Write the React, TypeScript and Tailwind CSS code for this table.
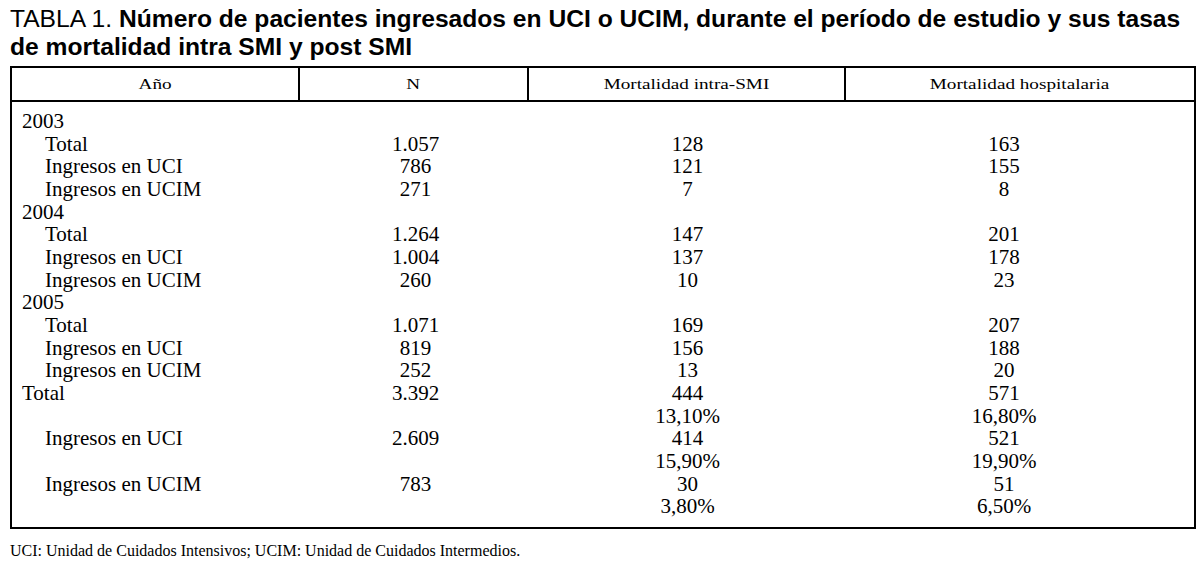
const serif = { fontFamily: '"Liberation Serif", "Times New Roman", serif' };

type Row = { label?: string; indent?: boolean; n?: string; intra?: string; hosp?: string };

const rows: Row[] = [
  { label: "2003" },
  { label: "Total", indent: true, n: "1.057", intra: "128", hosp: "163" },
  { label: "Ingresos en UCI", indent: true, n: "786", intra: "121", hosp: "155" },
  { label: "Ingresos en UCIM", indent: true, n: "271", intra: "7", hosp: "8" },
  { label: "2004" },
  { label: "Total", indent: true, n: "1.264", intra: "147", hosp: "201" },
  { label: "Ingresos en UCI", indent: true, n: "1.004", intra: "137", hosp: "178" },
  { label: "Ingresos en UCIM", indent: true, n: "260", intra: "10", hosp: "23" },
  { label: "2005" },
  { label: "Total", indent: true, n: "1.071", intra: "169", hosp: "207" },
  { label: "Ingresos en UCI", indent: true, n: "819", intra: "156", hosp: "188" },
  { label: "Ingresos en UCIM", indent: true, n: "252", intra: "13", hosp: "20" },
  { label: "Total", n: "3.392", intra: "444", hosp: "571" },
  { intra: "13,10%", hosp: "16,80%" },
  { label: "Ingresos en UCI", indent: true, n: "2.609", intra: "414", hosp: "521" },
  { intra: "15,90%", hosp: "19,90%" },
  { label: "Ingresos en UCIM", indent: true, n: "783", intra: "30", hosp: "51" },
  { intra: "3,80%", hosp: "6,50%" },
];

const headers = ["Año", "N", "Mortalidad intra-SMI", "Mortalidad hospitalaria"];

export default function App() {
  return (
    <div className="h-[567px] w-[1204px] overflow-hidden bg-white text-black">
      {/* título: dos líneas fijas, algo ensanchadas como en el original */}
      <h1
        className="pl-[10px] pt-[6px] text-[23px] leading-[27.5px]"
        style={{ fontFamily: '"Liberation Sans", Arial, sans-serif' }}
      >
        <span className="block origin-left scale-x-[1.07] whitespace-nowrap">
          TABLA 1. <b>Número de pacientes ingresados en UCI o UCIM, durante el período de estudio y sus tasas</b>
        </span>
        <span className="block origin-left scale-x-[1.07] whitespace-nowrap font-bold">
          de mortalidad intra SMI y post SMI
        </span>
      </h1>

      <div className="ml-[10px] mt-[5px] w-[1186px] border-2 border-black" style={serif}>
        <div className="grid h-[34px] grid-cols-[288px_229px_317px_1fr] border-b-2 border-black">
          {headers.map((h, i) => (
            <div
              key={h}
              className={`flex items-center justify-center ${i < 3 ? "border-r-2 border-black" : ""}`}
            >
              <span className="inline-block scale-x-[1.37] text-[14px]">{h}</span>
            </div>
          ))}
        </div>

        <div className="pb-[9px] pt-[8px] text-[21px] leading-[22.65px]">
          {rows.map((r, i) => (
            <div key={i} className="grid grid-cols-[288px_229px_317px_1fr]">
              <div className={r.indent ? "pl-[33px]" : "pl-[10px]"}>{r.label}</div>
              <div className="pl-[2px] text-center">{r.n}</div>
              <div className="text-center">{r.intra}</div>
              <div className="pr-[32px] text-center">{r.hosp}</div>
            </div>
          ))}
        </div>
      </div>

      <p className="pl-[10px] pt-[13px] text-[16px] leading-[18px]" style={serif}>
        UCI: Unidad de Cuidados Intensivos; UCIM: Unidad de Cuidados Intermedios.
      </p>
    </div>
  );
}
